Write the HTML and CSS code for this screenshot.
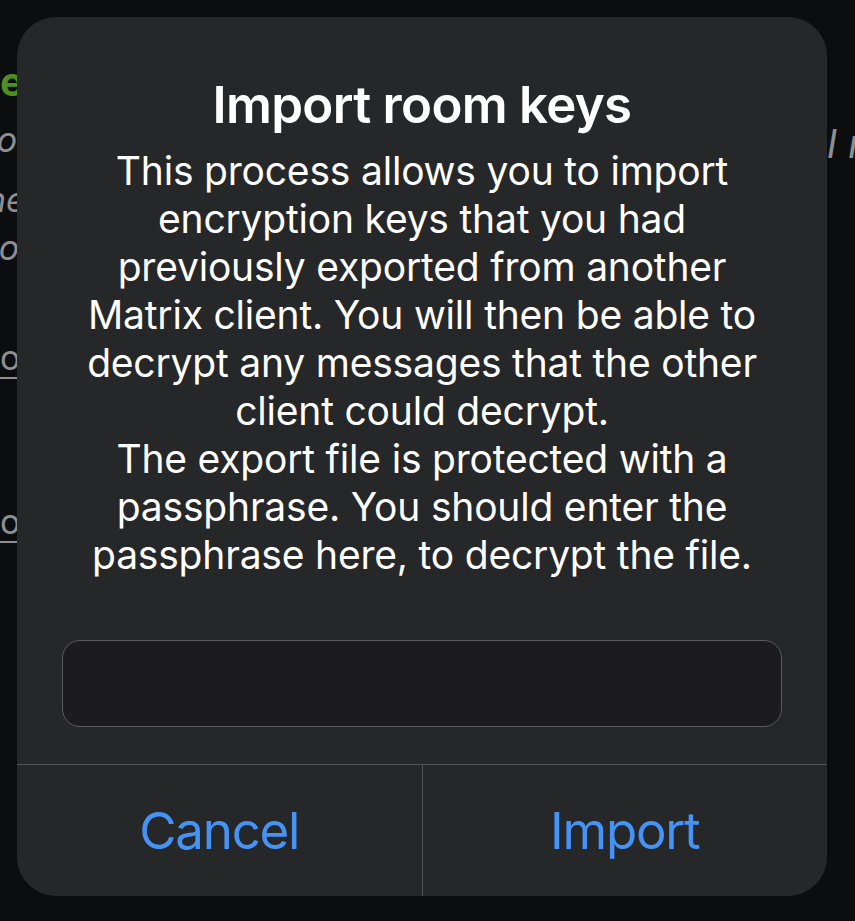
FILE: index.html
```html
<!DOCTYPE html>
<html lang="en">
<head>
	<meta charset="UTF-8">
	<title>Import room keys</title>
	<link rel="stylesheet" href="styles.css">
</head>
<body>
<div class="page">
	<div class="row row-1"><span class="frag green">ed</span></div>
	<div class="row row-2"><span class="frag italic">fo</span><span class="frag-right italic">l re</span></div>
	<div class="row row-3"><span class="frag italic">ned</span></div>
	<div class="row row-4"><span class="frag italic">to</span></div>
	<div class="row row-5"><span class="frag link">ok</span></div>
	<div class="row row-6"><span class="frag link">ok</span></div>
</div>

<div class="alert">
	<div class="alert-body">
		<h1 class="alert-title">Import room keys</h1>
		<p class="alert-message">This process allows you to import<br>encryption keys that you had<br>previously exported from another<br>Matrix client. You will then be able to<br>decrypt any messages that the other<br>client could decrypt.<br>The export file is protected with a<br>passphrase. You should enter the<br>passphrase here, to decrypt the file.</p>
		<input class="alert-field" type="password">
	</div>
	<div class="alert-actions">
		<a href="javascript:" class="alert-btn">Cancel</a>
		<a href="javascript:" class="alert-btn">Import</a>
	</div>
</div>
</body>
</html>
```

FILE: styles.css
```css
html, body {
	margin: 0;
	padding: 0;
	background: #0c0d0f;
	font-family: Inter, "Noto Sans", sans-serif;
	overflow: hidden;
}
.page {
	height: 921px;
	padding-top: 62px;
	box-sizing: border-box;
	color: #8e8e93;
	font-size: 34px;
}
.row {
	display: flex;
	height: 40px;
	line-height: 40px;
	white-space: nowrap;
}
.row-2 { margin-top: 18px; }
.row-3 { margin-top: 20px; }
.row-4 { margin-top: 8px; }
.row-5 { margin-top: 70px; }
.row-6 { margin-top: 124px; }
.frag {
	margin-left: 0;
}
.row-2 .frag {
	margin-left: -15px;
}
.row-4 .frag {
	margin-left: -12px;
}
.row-3 .frag {
	margin-left: -14px;
}
.green {
	color: #4e8f1f;
	font-weight: 700;
	font-size: 40px;
}
.italic {
	font-style: italic;
}
.link {
	text-decoration: underline;
	text-decoration-thickness: 2px;
	text-underline-offset: 7px;
}
.frag-right {
	margin-left: auto;
	width: 28px;
	overflow: hidden;
	margin-top: 4px;
	font-size: 40px;
}

.alert {
	position: absolute;
	left: 17px;
	top: 17px;
	width: 810px;
	background: #262729;
	border-radius: 39px;
	overflow: hidden;
	color: #fff;
}
.alert-body {
	padding: 58px 45px 37px;
	text-align: center;
}
.alert-title {
	margin: 0;
	font-size: 51px;
	line-height: 60px;
	font-weight: 600;
	letter-spacing: -0.7px;
}
.alert-message {
	margin: 12px 0 0;
	font-size: 39px;
	line-height: 48px;
	letter-spacing: -0.2px;
}
.alert-field {
	display: block;
	width: 100%;
	height: 87px;
	margin-top: 61px;
	box-sizing: border-box;
	background: #1c1c1e;
	border: 1.5px solid #5c5c5f;
	border-radius: 18px;
	outline: none;
}
.alert-actions {
	display: flex;
	border-top: 1.5px solid #545457;
	height: 131px;
}
.alert-btn {
	flex: 1;
	display: flex;
	align-items: center;
	justify-content: center;
	color: #4593f5;
	font-size: 51px;
	letter-spacing: -1.2px;
	text-decoration: none;
}
.alert-btn + .alert-btn {
	border-left: 1.5px solid #545457;
}
```
